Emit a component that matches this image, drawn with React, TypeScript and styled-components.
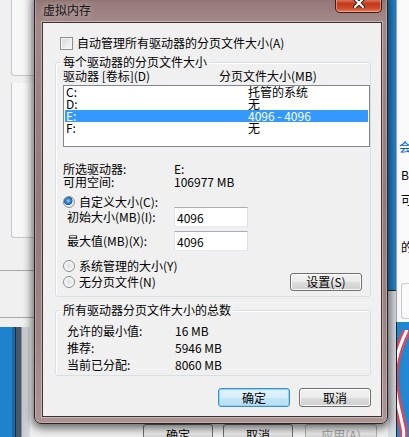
import React from 'react'
import styled, { createGlobalStyle, css } from 'styled-components'

const FONT = `"Noto Sans CJK SC", "Noto Sans", sans-serif`

const GlobalStyle = createGlobalStyle`
  html, body { margin: 0; padding: 0; }
  body { font-family: ${FONT}; font-size: 12px; color: #000; }
`

const drives = [
  { name: 'C:', size: '托管的系统' },
  { name: 'D:', size: '无' },
  { name: 'E:', size: '4096 - 4096', selected: true },
  { name: 'F:', size: '无' },
]

const totals = [
  { label: '允许的最小值:', value: '16 MB' },
  { label: '推荐:', value: '5946 MB' },
  { label: '当前已分配:', value: '8060 MB' },
]

function App() {
  return (
    <>
      <GlobalStyle />
      <Desktop>
        <Stroke width="20" height="110" viewBox="0 0 20 110">
          <path d="M18 0 C 8 20, 2 40, 8 70 S 16 100, 14 110" stroke="#e04858" strokeWidth="8" fill="none" />
          <path d="M18 0 C 8 20, 2 40, 8 70 S 16 100, 14 110" stroke="#fff" strokeWidth="3" fill="none" />
        </Stroke>

        {/* system properties window behind */}
        <BackWindow>
          <BackClient>
            <BackButtons>
              <BackButton>确定</BackButton>
              <BackButton>取消</BackButton>
              <BackButton $disabled $wide>应用(A)</BackButton>
            </BackButtons>
          </BackClient>
        </BackWindow>

        <LeftWindow>
          <LeftPanel $h={85} />
          <LeftPanel $h={154} $gap={7} />
          <LeftRule $gap={32} />
          <LeftRule $gap={46} />
        </LeftWindow>

        <RightWindow>
          <Fragment $gap={150} $link>会</Fragment>
          <Fragment $gap={14}>B-</Fragment>
          <Fragment $gap={11}>可用</Fragment>
          <Fragment $gap={33}>的</Fragment>
          <RightGroup />
        </RightWindow>

        <Dialog>
          <TitleBar>
            <Title>虚拟内存</Title>
            <CloseButton>
              <svg width="12" height="10" viewBox="0 0 12 10">
                <path d="M2 1 L10 9 M10 1 L2 9" stroke="#2a2020" strokeWidth="4" strokeLinecap="round" />
                <path d="M2 1 L10 9 M10 1 L2 9" stroke="#fff" strokeWidth="2" strokeLinecap="round" />
              </svg>
            </CloseButton>
          </TitleBar>

          <Client>
            <CheckRow>
              <CheckBox />
              <span>自动管理所有驱动器的分页文件大小(A)</span>
            </CheckRow>

            <Group>
              <Legend>每个驱动器的分页文件大小</Legend>
              <HeaderRow>
                <span>驱动器 [卷标](D)</span>
                <span>分页文件大小(MB)</span>
              </HeaderRow>
              <DriveList>
                {drives.map((d) => (
                  <DriveRow key={d.name} $selected={d.selected}>
                    <span>{d.name}</span>
                    <span>{d.size}</span>
                  </DriveRow>
                ))}
              </DriveList>

              <InfoGrid>
                <span>所选驱动器:</span>
                <span>E:</span>
                <span>可用空间:</span>
                <span>106977 MB</span>
              </InfoGrid>

              <RadioRow $gap={8}>
                <Radio $checked />
                <span>自定义大小(C):</span>
              </RadioRow>
              <FieldRow $gap={0}>
                <FieldLabel>初始大小(MB)(I):</FieldLabel>
                <TextBox defaultValue="4096" />
              </FieldRow>
              <FieldRow $gap={4}>
                <FieldLabel>最大值(MB)(X):</FieldLabel>
                <TextBox defaultValue="4096" />
              </FieldRow>
              <RadioRow $gap={9}>
                <Radio />
                <span>系统管理的大小(Y)</span>
              </RadioRow>
              <LastRow>
                <Radio />
                <span>无分页文件(N)</span>
                <PushButton $push>设置(S)</PushButton>
              </LastRow>
            </Group>

            <Group $gap={6} $bottom={2}>
              <Legend>所有驱动器分页文件大小的总数</Legend>
              <TotalsGrid>
                {totals.map((t) => (
                  <React.Fragment key={t.label}>
                    <span>{t.label}</span>
                    <span>{t.value}</span>
                  </React.Fragment>
                ))}
              </TotalsGrid>
            </Group>

            <ButtonRow>
              <PushButton $default>确定</PushButton>
              <PushButton>取消</PushButton>
            </ButtonRow>
          </Client>
        </Dialog>
      </Desktop>
    </>
  )
}

export default App

const Desktop = styled.div`
  position: relative;
  width: 409px;
  height: 437px;
  overflow: hidden;
  background: linear-gradient(90deg, #1f82cc 0px, #1f82cc 12px, #0d5c9c 13px, #1a78c2 15px, #2288d2 100%);
`

const Stroke = styled.svg`
  position: absolute;
  right: 0;
  top: 330px;
`

const BackWindow = styled.div`
  position: absolute;
  left: 15px;
  top: 290px;
  width: 382px;
  height: 180px;
  box-sizing: border-box;
  border: 1px solid #1c2630;
  background: linear-gradient(90deg, #4a5866 0px, #4a5866 5px, #c3c9cf 6px, #d8dde2 14px);
  padding: 0 8px 0 14px;
`

const BackClient = styled.div`
  height: 100%;
  background: #f0f0f0;
  padding: 133px 11px 0 0;
  box-sizing: border-box;
`

const BackButtons = styled.div`
  display: flex;
  justify-content: flex-end;
  gap: 10px;
`

const BackButton = styled.div<{ $disabled?: boolean; $wide?: boolean }>`
  width: ${(p) => (p.$wide ? 72 : 70)}px;
  height: 22px;
  box-sizing: border-box;
  border: 1px solid ${(p) => (p.$disabled ? '#adb2b5' : '#707070')};
  border-radius: 3px;
  background: linear-gradient(#f2f2f2 0%, #ebebeb 50%, #dddddd 51%, #cfcfcf 100%);
  color: ${(p) => (p.$disabled ? '#a0a0a0' : '#000')};
  text-align: center;
  line-height: 20px;
  ${(p) => p.$wide && css`margin-left: 2px;`}
`

const LeftWindow = styled.div`
  position: absolute;
  left: -120px;
  top: -10px;
  width: 154px;
  height: 337px;
  background: #f0f0f0;
  display: flex;
  flex-direction: column;
`

const LeftPanel = styled.div<{ $h: number; $gap?: number }>`
  margin-left: 131px;
  margin-top: ${(p) => p.$gap ?? 0}px;
  height: ${(p) => p.$h}px;
  border-left: 1px solid #c4c8cc;
  border-bottom: 1px solid #c4c8cc;
  border-radius: 0 0 0 3px;
  background: #f7f7f7;
  flex-shrink: 0;
`

const LeftRule = styled.div<{ $gap: number }>`
  margin-top: ${(p) => p.$gap}px;
  height: 1px;
  background: #a8a8a8;
  flex-shrink: 0;
`

const RightWindow = styled.div`
  position: absolute;
  left: 396px;
  top: -10px;
  width: 30px;
  height: 332px;
  background: #fafafa;
  border-left: 1px solid #a8a8a8;
  display: flex;
  flex-direction: column;
  padding-left: 1px;
  white-space: nowrap;
`

const Fragment = styled.div<{ $gap: number; $link?: boolean }>`
  margin-top: ${(p) => p.$gap}px;
  line-height: 14px;
  color: ${(p) => (p.$link ? '#0066cc' : '#000')};
  padding-left: ${(p) => (p.$link ? 1 : 3)}px;
`

const RightGroup = styled.div`
  margin-top: 29px;
  margin-left: 3px;
  height: 34px;
  border: 1px solid #c8ccd0;
  border-right: none;
  border-radius: 3px 0 0 3px;
`

const Dialog = styled.div`
  position: absolute;
  left: 34px;
  top: -8px;
  width: 354px;
  height: 432px;
  box-sizing: border-box;
  border: 1px solid #2e2222;
  border-radius: 7px;
  background: linear-gradient(180deg, #7b5e5e 0px, #977a7a 10px, #a38989 28px, #94797a 50%, #a08585 80%, #ad9494 100%);
  box-shadow: inset 0 0 0 1px rgba(255, 255, 255, 0.25), 0 2px 10px 2px rgba(0, 0, 0, 0.6);
  padding: 0 5px 6px 7px;
  display: flex;
  flex-direction: column;
`

const TitleBar = styled.div`
  height: 29px;
  flex-shrink: 0;
  display: flex;
  align-items: flex-start;
`

const Title = styled.div`
  padding: 10px 0 0 1px;
  line-height: 14px;
  font-size: 12px;
  color: #111;
  text-shadow: 0 0 6px rgba(255, 255, 255, 0.55);
`

const CloseButton = styled.div`
  margin-left: auto;
  width: 47px;
  height: 20px;
  box-sizing: border-box;
  border: 1px solid #3b1c16;
  border-top: none;
  border-radius: 0 0 5px 5px;
  background: linear-gradient(#e6a08c 0%, #d86a50 40%, #c2391c 55%, #cf4a28 80%, #e0805c 100%);
  box-shadow: inset 0 0 0 1px rgba(255, 220, 200, 0.45);
  display: flex;
  align-items: center;
  justify-content: center;
`

const Client = styled.div`
  flex: 1;
  min-height: 0;
  background: #f0f0f0;
  border: 1px solid #3f3131;
  box-shadow: 0 0 0 1px rgba(255, 255, 255, 0.35);
  padding: 13px 10px 9px 12px;
  display: flex;
  flex-direction: column;
`

const CheckRow = styled.div`
  display: flex;
  align-items: center;
  gap: 4px;
  height: 14px;
  padding-left: 5px;
  line-height: 14px;
`

const CheckBox = styled.span`
  width: 13px;
  height: 13px;
  box-sizing: border-box;
  border: 1px solid #8e8f8f;
  background: linear-gradient(135deg, #d6d6d6, #fbfbfb);
  box-shadow: inset 0 0 0 1px #f4f4f4;
  flex-shrink: 0;
`

const Group = styled.fieldset<{ $gap?: number; $bottom?: number }>`
  margin: ${(p) => p.$gap ?? 5}px 0 0;
  padding: 0 0 ${(p) => p.$bottom ?? 5}px 7px;
  min-width: 0;
  border: 1px solid #d5dfe5;
  border-radius: 3px;
  box-shadow: inset 1px 1px 0 #fff;
  display: flex;
  flex-direction: column;
`

const Legend = styled.legend`
  padding: 0 2px;
  margin-left: -2px;
  height: 14px;
  line-height: 14px;
`

const HeaderRow = styled.div`
  display: grid;
  grid-template-columns: 156px 1fr;
  height: 14px;
  line-height: 14px;
`

const DriveList = styled.div`
  margin-top: 2px;
  height: 62px;
  box-sizing: border-box;
  border: 1px solid #828790;
  background: #fff;
`

const DriveRow = styled.div<{ $selected?: boolean }>`
  display: grid;
  grid-template-columns: 182px 1fr;
  height: 12px;
  line-height: 12px;
  padding-left: 1px;
  margin: 0 1px 0 1px;
  ${(p) =>
    p.$selected &&
    css`
      background: #3399ff;
      color: #fff;
    `}
`

const InfoGrid = styled.div`
  margin-top: 15px;
  display: grid;
  grid-template-columns: 111px 1fr;
  grid-auto-rows: 13px;
  line-height: 13px;
`

const RadioRow = styled.div<{ $gap: number }>`
  margin-top: ${(p) => p.$gap}px;
  height: 11px;
  display: flex;
  align-items: center;
  gap: 4px;
  line-height: 12px;
`

const Radio = styled.span<{ $checked?: boolean }>`
  width: 12px;
  height: 12px;
  box-sizing: border-box;
  border-radius: 50%;
  border: 1px solid #8e8f8f;
  flex-shrink: 0;
  background: radial-gradient(circle at 50% 50%, #dcdcdc 0%, #f2f2f2 50%, #fdfdfd 100%);
  ${(p) =>
    p.$checked &&
    css`
      background: radial-gradient(circle at 42% 38%, #a9dcff 0px, #3f8fd6 2px, #1a5c9c 4px, #e6eef4 4.6px, #fafafa 100%);
    `}
`

const FieldRow = styled.div<{ $gap: number }>`
  margin-top: ${(p) => p.$gap}px;
  display: flex;
  align-items: center;
  height: 20px;
  padding-left: 4px;
`

const FieldLabel = styled.span`
  width: 107px;
  line-height: 14px;
`

const TextBox = styled.input`
  width: 74px;
  height: 20px;
  box-sizing: border-box;
  margin: 0;
  padding: 0 0 0 2px;
  border: 1px solid;
  border-color: #abadb3 #dbdfe6 #e3e9ef #e2e3ea;
  background: #fff;
  font: 12px ${FONT};
  color: #000;
  outline: none;
`

const LastRow = styled.div`
  margin-top: 2px;
  height: 18px;
  display: flex;
  align-items: center;
  gap: 4px;
  padding-right: 8px;
  line-height: 12px;
`

const PushButton = styled.button<{ $default?: boolean; $push?: boolean }>`
  width: 72px;
  height: ${(p) => (p.$push ? 18 : 19)}px;
  padding: 0;
  box-sizing: border-box;
  font: 12px ${FONT};
  line-height: 16px;
  color: #000;
  border: 1px solid #707070;
  border-radius: 3px;
  background: linear-gradient(#f2f2f2 0%, #ebebeb 50%, #dddddd 51%, #cfcfcf 100%);
  box-shadow: inset 0 0 0 1px rgba(255, 255, 255, 0.85);
  ${(p) => p.$push && css`margin-left: auto;`}
  ${(p) =>
    p.$default &&
    css`
      border-color: #3c8fd0;
      background: linear-gradient(#e5f4fc 0%, #d7eefb 50%, #c4e5f8 51%, #b6dcf4 100%);
      box-shadow: inset 0 0 0 1px #8fd4f5, inset 0 0 3px 1px #c6ecfb;
    `}
`

const TotalsGrid = styled.div`
  margin-top: 5px;
  padding-left: 4px;
  display: grid;
  grid-template-columns: 108px 1fr;
  grid-auto-rows: 17px;
  line-height: 17px;
`

const ButtonRow = styled.div`
  margin-top: 12px;
  display: flex;
  justify-content: flex-end;
  gap: 9px;
`
